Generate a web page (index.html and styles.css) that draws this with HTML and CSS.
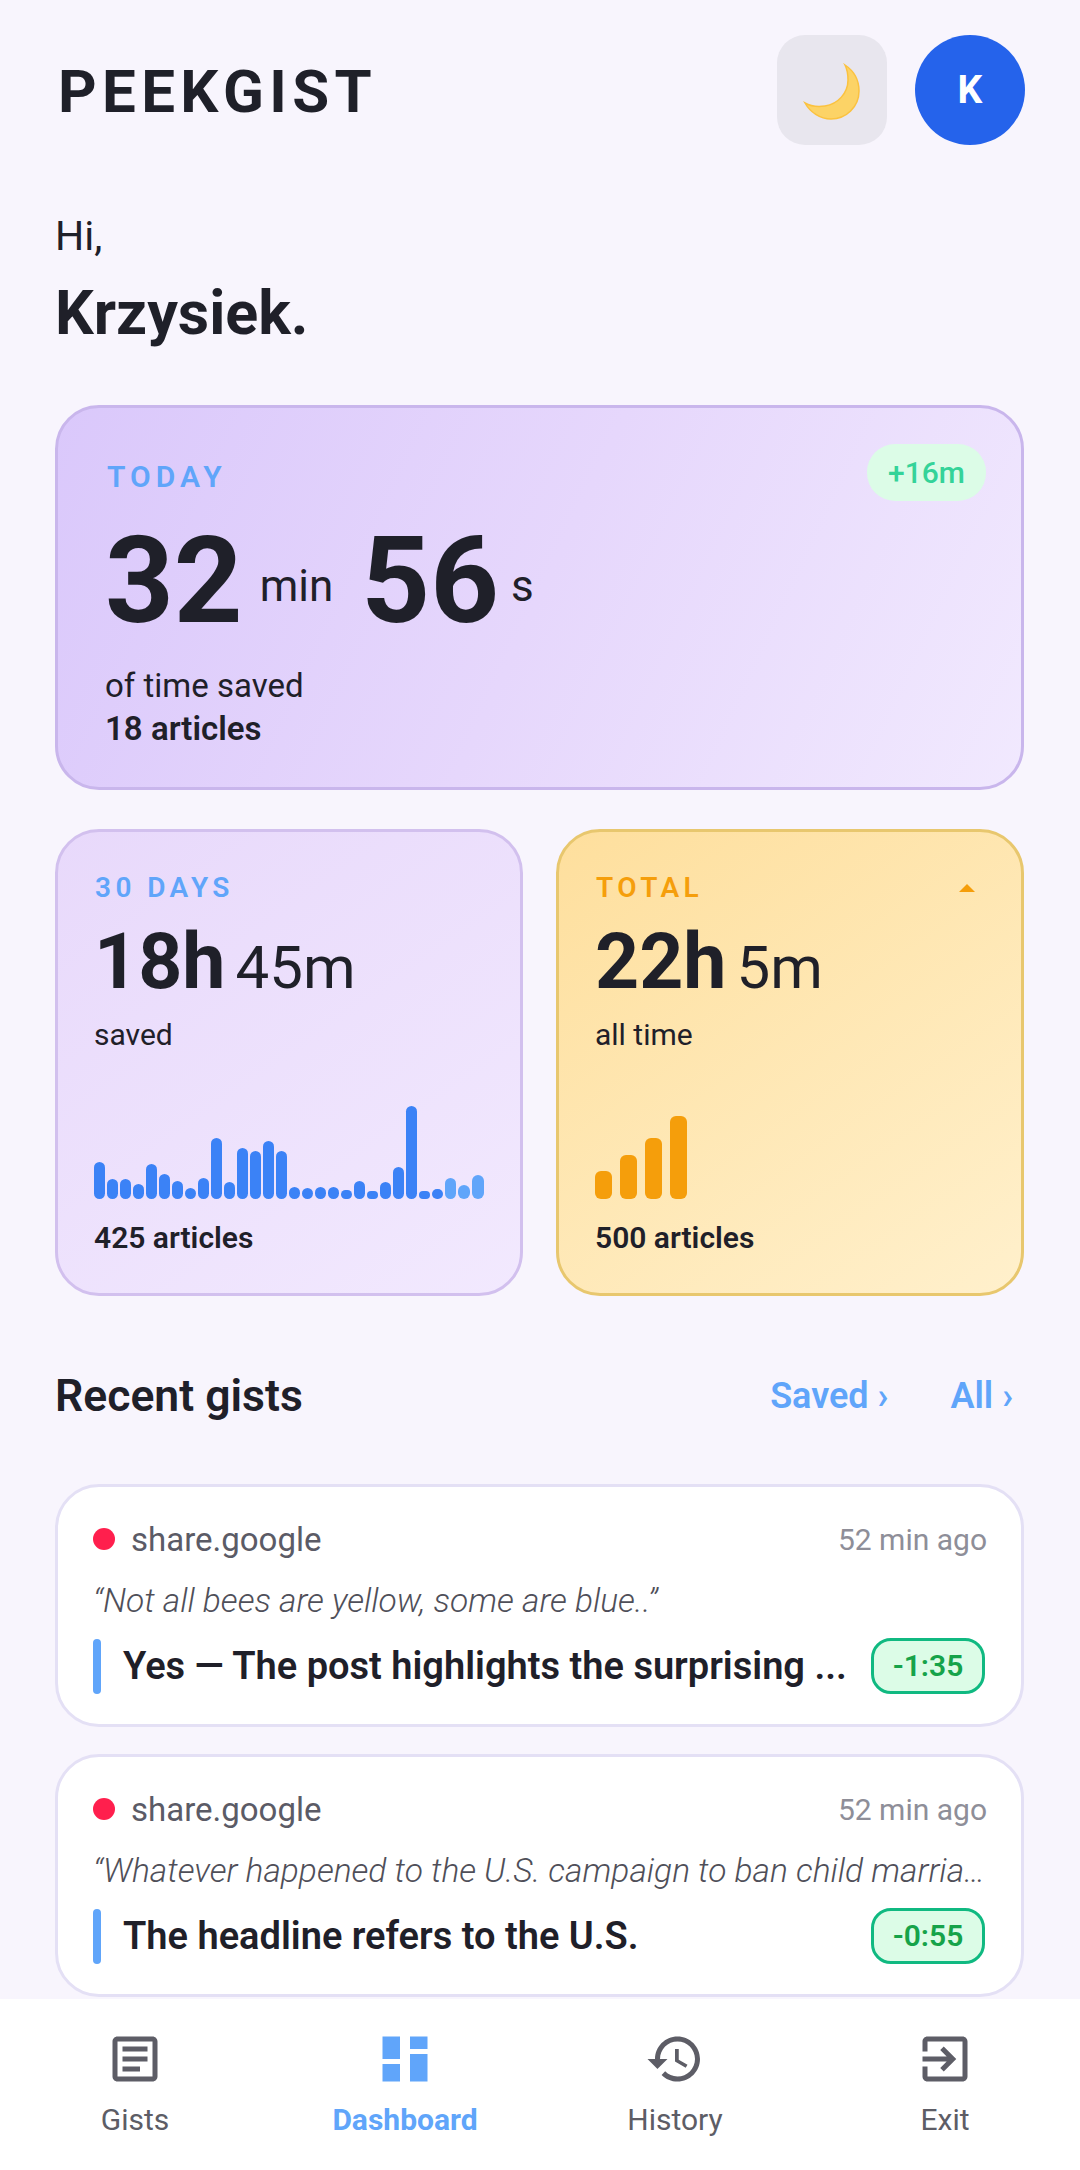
FILE: index.html
```html
<!DOCTYPE html>
<html lang="en">

<head>
    <meta charset="UTF-8">
    <meta name="viewport" content="width=device-width, initial-scale=1.0">
    <title>Peekgist</title>
    <link rel="stylesheet" href="styles.css">
</head>

<body>
    <main class="page">
        <header class="top">
            <div class="logo">PEEKGIST</div>
            <div class="top-actions">
                <button class="theme-btn">
                    <svg class="moon" viewBox="0 0 60 60">
                        <path d="M45 5C54 11 59 20 59 31C59 47 46 59 31 59C20 59 10 52 5 43C12 47 18 47 25 46C38 44 48 33 48 20C48 14 47 9 45 5Z" />
                    </svg>
                </button>
                <div class="avatar">K</div>
            </div>
        </header>

        <section class="hello">
            <div class="hi">Hi,</div>
            <div class="name">Krzysiek.</div>
        </section>

        <section class="card today">
            <div class="today-head">
                <div class="label label-blue">TODAY</div>
                <div class="delta">+16m</div>
            </div>
            <div class="today-time"><span class="big">32</span><span class="unit">min</span><span class="big big-next">56</span><span class="unit unit-s">s</span></div>
            <div class="today-sub">of time saved</div>
            <div class="today-count">18 articles</div>
        </section>

        <section class="stats">
            <div class="card stat month">
                <div class="label label-blue">30 DAYS</div>
                <div class="stat-time"><span class="stat-big">18h</span><span class="stat-small">45m</span></div>
                <div class="stat-sub">saved</div>
                <div class="chart">
                    <i style="height:37px"></i><i style="height:20px"></i><i style="height:20px"></i><i style="height:15px"></i><i style="height:35px"></i>
                    <i style="height:25px"></i><i style="height:18px"></i><i style="height:11px"></i><i style="height:21px"></i><i style="height:61px"></i>
                    <i style="height:17px"></i><i style="height:51px"></i><i style="height:48px"></i><i style="height:58px"></i><i style="height:48px"></i>
                    <i style="height:12px"></i><i style="height:11px"></i><i style="height:12px"></i><i style="height:12px"></i><i style="height:9px"></i>
                    <i style="height:18px"></i><i style="height:8px"></i><i style="height:17px"></i><i style="height:32px"></i><i style="height:93px"></i>
                    <i style="height:8px"></i><i style="height:10px"></i><i class="soft" style="height:21px"></i><i class="soft wide" style="height:14px"></i><i class="soft wide" style="height:24px"></i>
                </div>
                <div class="stat-count">425 articles</div>
            </div>

            <div class="card stat total">
                <div class="total-head">
                    <div class="label label-orange">TOTAL</div>
                    <span class="caret"></span>
                </div>
                <div class="stat-time"><span class="stat-big">22h</span><span class="stat-small">5m</span></div>
                <div class="stat-sub">all time</div>
                <div class="steps">
                    <i style="height:28px"></i><i style="height:44px"></i><i style="height:61px"></i><i style="height:83px"></i>
                </div>
                <div class="stat-count">500 articles</div>
            </div>
        </section>

        <section class="recent-head">
            <h2>Recent gists</h2>
            <div class="recent-links">
                <a>Saved ›</a>
                <a>All ›</a>
            </div>
        </section>

        <article class="gist">
            <div class="gist-top">
                <span class="dot"></span>
                <span class="site">share.google</span>
                <span class="ago">52 min ago</span>
            </div>
            <div class="quote">“Not all bees are yellow, some are blue..”</div>
            <div class="gist-row">
                <span class="bar"></span>
                <span class="title">Yes — The post highlights the surprising ...</span>
                <span class="badge">-1:35</span>
            </div>
        </article>

        <article class="gist">
            <div class="gist-top">
                <span class="dot"></span>
                <span class="site">share.google</span>
                <span class="ago">52 min ago</span>
            </div>
            <div class="quote">“Whatever happened to the U.S. campaign to ban child marria…</div>
            <div class="gist-row">
                <span class="bar"></span>
                <span class="title">The headline refers to the U.S.</span>
                <span class="badge">-0:55</span>
            </div>
        </article>
    </main>

    <nav class="nav">
        <a class="nav-item">
            <svg viewBox="0 0 24 24"><path d="M19 5v14H5V5h14m0-2H5c-1.1 0-2 .9-2 2v14c0 1.1.9 2 2 2h14c1.1 0 2-.9 2-2V5c0-1.1-.9-2-2-2z" /><path d="M14 17H7v-2h7v2zm3-4H7v-2h10v2zm0-4H7V7h10v2z" /></svg>
            <span>Gists</span>
        </a>
        <a class="nav-item active">
            <svg viewBox="0 0 24 24"><path d="M3 3h7v9H3zM3 14h7v7H3zM14 3h7v5h-7zM14 10h7v11h-7z" /></svg>
            <span>Dashboard</span>
        </a>
        <a class="nav-item">
            <svg viewBox="0 0 24 24"><path d="M13 3c-4.97 0-9 4.03-9 9H1l3.89 3.89.07.14L9 12H6c0-3.87 3.13-7 7-7s7 3.13 7 7-3.13 7-7 7c-1.93 0-3.68-.79-4.94-2.06l-1.42 1.42C8.27 19.99 10.51 21 13 21c4.97 0 9-4.03 9-9s-4.03-9-9-9zm-1 5v5l4.28 2.54.72-1.21-3.5-2.08V8H12z" /></svg>
            <span>History</span>
        </a>
        <a class="nav-item">
            <svg viewBox="0 0 24 24"><path d="M10.09 15.59L11.5 17l5-5-5-5-1.41 1.41L12.67 11H3v2h9.67l-2.58 2.59zM19 3H5c-1.11 0-2 .9-2 2v4h2V5h14v14H5v-4H3v4c0 1.1.89 2 2 2h14c1.1 0 2-.9 2-2V5c0-1.1-.9-2-2-2z" /></svg>
            <span>Exit</span>
        </a>
    </nav>
</body>

</html>
```

FILE: styles.css
```css
* {
    box-sizing: border-box;
}

body {
    margin: 0;
    height: 2170px;
    display: flex;
    flex-direction: column;
    overflow: hidden;
    background-color: #f8f5fd;
    color: #1f2029;
    font-family: Roboto, "Noto Sans", sans-serif;
}

.page {
    flex: 1;
    min-height: 0;
    overflow: hidden;
    padding: 35px 56px 0 55px;
}

/* header */
.top {
    display: flex;
    justify-content: space-between;
    align-items: center;
    height: 110px;
}

.logo {
    padding: 3px 0 0 3px;
    font-size: 60px;
    font-weight: 700;
    letter-spacing: 5.4px;
}

.top-actions {
    display: flex;
    gap: 28px;
    margin-right: -1px;
}

.theme-btn {
    width: 110px;
    height: 110px;
    padding: 0;
    border: 0;
    border-radius: 28px;
    background-color: #e8e6ee;
    display: flex;
    align-items: center;
    justify-content: center;
}

.moon {
    width: 60px;
    height: 60px;
    margin-right: 4px;
    flex-shrink: 0;
}

.moon path {
    fill: #fcd366;
    stroke: #fbc23f;
    stroke-width: 1.5;
}

.avatar {
    width: 110px;
    height: 110px;
    border-radius: 50%;
    background-color: #2563eb;
    color: #fff;
    font-size: 39px;
    font-weight: 700;
    display: flex;
    align-items: center;
    justify-content: center;
}

/* greeting */
.hello {
    margin-top: 66px;
}

.hi {
    font-size: 41px;
    font-weight: 400;
    line-height: 50px;
}

.name {
    margin-top: 17px;
    font-size: 61px;
    font-weight: 700;
    line-height: 70px;
}

/* cards */
.card {
    border-radius: 44px;
    border: 3px solid #c9b6ec;
}

.label {
    font-size: 28px;
    font-weight: 600;
    letter-spacing: 4.4px;
    line-height: 34px;
}

.label-blue {
    color: #60a5fa;
}

.label-orange {
    color: #f59e0b;
}

.today {
    height: 385px;
    margin-top: 57px;
    padding: 36px 36px 0 47px;
    background: linear-gradient(115deg, #dac8fb 0%, #e6d7fc 50%, #f1e9fe 100%);
}

.today-head {
    display: flex;
    justify-content: space-between;
    align-items: flex-start;
}

.today-head .label {
    margin-top: 16px;
    font-size: 30px;
    letter-spacing: 5px;
    padding-left: 2px;
}

.delta {
    width: 119px;
    height: 57px;
    margin-right: -1px;
    border-radius: 28px;
    background-color: #dcfce7;
    color: #34d399;
    font-size: 30px;
    font-weight: 500;
    line-height: 57px;
    text-align: center;
}

.today-time {
    height: 140px;
    margin-top: 10px;
    line-height: 140px;
    white-space: nowrap;
}

.big {
    font-size: 120px;
    font-weight: 700;
}

.big-next {
    margin-left: 28px;
}

/* sits above the baseline of the big digits */
.unit {
    margin-left: 17px;
    font-size: 44px;
    font-weight: 400;
    vertical-align: 21px;
    line-height: 1;
}

.unit-s {
    margin-left: 12px;
}

.today-sub {
    margin-top: 15px;
    font-size: 33px;
    line-height: 40px;
}

.today-count {
    margin-top: 3px;
    font-size: 33px;
    font-weight: 600;
    line-height: 40px;
}

.stats {
    display: grid;
    grid-template-columns: 1fr 1fr;
    gap: 33px;
    margin-top: 39px;
}

.stat {
    height: 467px;
    padding: 39px 36px 0;
    display: flex;
    flex-direction: column;
}

.stat .label {
    padding-left: 1px;
}

.month {
    border-color: #d2c0ee;
    background: linear-gradient(145deg, #e8d9fb 0%, #f2e9fe 100%);
}

.total {
    border-color: #e8c76e;
    background: linear-gradient(145deg, #fedf9d 0%, #fff0cc 100%);
}

.total-head {
    display: flex;
    justify-content: space-between;
    align-items: center;
}

.caret {
    width: 0;
    height: 0;
    margin-right: 10px;
    border-left: 8px solid transparent;
    border-right: 8px solid transparent;
    border-bottom: 8px solid #f59e0b;
}

.stat-time {
    display: flex;
    align-items: baseline;
    gap: 10px;
    height: 90px;
    margin-top: 12px;
    line-height: 90px;
}

.stat-big {
    font-size: 77px;
    font-weight: 700;
}

.stat-small {
    font-size: 60px;
    font-weight: 400;
}

.stat-sub {
    margin-top: 9px;
    font-size: 30px;
    line-height: 38px;
}

.chart,
.steps {
    display: flex;
    align-items: flex-end;
    margin-top: auto;
}

.chart {
    gap: 2px;
}

.chart i {
    width: 11px;
    border-radius: 6px;
    background-color: #3b82f6;
}

.chart .soft {
    background-color: #60a5fa;
}

.chart .wide {
    width: 12px;
}

.steps {
    gap: 8px;
}

.steps i {
    width: 17px;
    border-radius: 6px;
    background-color: #f59e0b;
}

.stat-count {
    margin: 20px 0 36px;
    font-size: 30px;
    font-weight: 600;
    line-height: 38px;
}

/* recent list */
.recent-head {
    display: flex;
    justify-content: space-between;
    align-items: center;
    margin-top: 75px;
    height: 50px;
}

.recent-head h2 {
    margin: 0;
    font-size: 44.5px;
    font-weight: 600;
}

.recent-links {
    display: flex;
    gap: 62px;
    padding-right: 11px;
    color: #60a5fa;
    font-size: 36px;
    font-weight: 600;
}

.gist {
    height: 243px;
    margin-bottom: 27px;
    padding: 32px 36px 0 35px;
    border: 3px solid #e4e0f5;
    border-radius: 44px;
    background-color: #fff;
}

.recent-head + .gist {
    margin-top: 63px;
}

.gist-top {
    display: flex;
    align-items: center;
    height: 40px;
}

.dot {
    width: 22px;
    height: 22px;
    border-radius: 50%;
    background-color: #ff1f4d;
    margin-right: 16px;
}

.site {
    font-size: 33px;
    color: #5b5b66;
}

.ago {
    margin-left: auto;
    margin-right: -2px;
    font-size: 30px;
    color: #8e8e98;
}

.quote {
    margin-top: 22px;
    font-size: 33.5px;
    font-weight: 300;
    font-style: italic;
    line-height: 40px;
    color: #4f4f59;
    white-space: nowrap;
}

.gist-row {
    display: flex;
    align-items: center;
    margin-top: 17px;
    height: 56px;
}

.bar {
    width: 8px;
    height: 55px;
    flex-shrink: 0;
    border-radius: 4px;
    background-color: #60a5fa;
}

.title {
    flex: 1;
    min-width: 0;
    margin: 0 25px 0 22px;
    font-size: 38px;
    font-weight: 600;
    white-space: nowrap;
}

.badge {
    width: 114px;
    height: 56px;
    flex-shrink: 0;
    border: 3px solid #10b981;
    border-radius: 20px;
    background-color: #dcfce7;
    color: #16a34a;
    font-size: 30px;
    font-weight: 600;
    line-height: 50px;
    text-align: center;
}

/* bottom nav */
.nav {
    height: 171px;
    flex-shrink: 0;
    display: grid;
    grid-template-columns: repeat(4, 1fr);
    background-color: #fff;
    padding-top: 30px;
}

.nav-item {
    display: flex;
    flex-direction: column;
    align-items: center;
    color: #5d5d66;
    font-size: 30px;
    line-height: 36px;
}

.nav-item svg {
    width: 60px;
    height: 60px;
    margin-bottom: 13px;
    fill: currentColor;
}

.nav-item.active {
    color: #60a5fa;
    font-weight: 700;
}
```
